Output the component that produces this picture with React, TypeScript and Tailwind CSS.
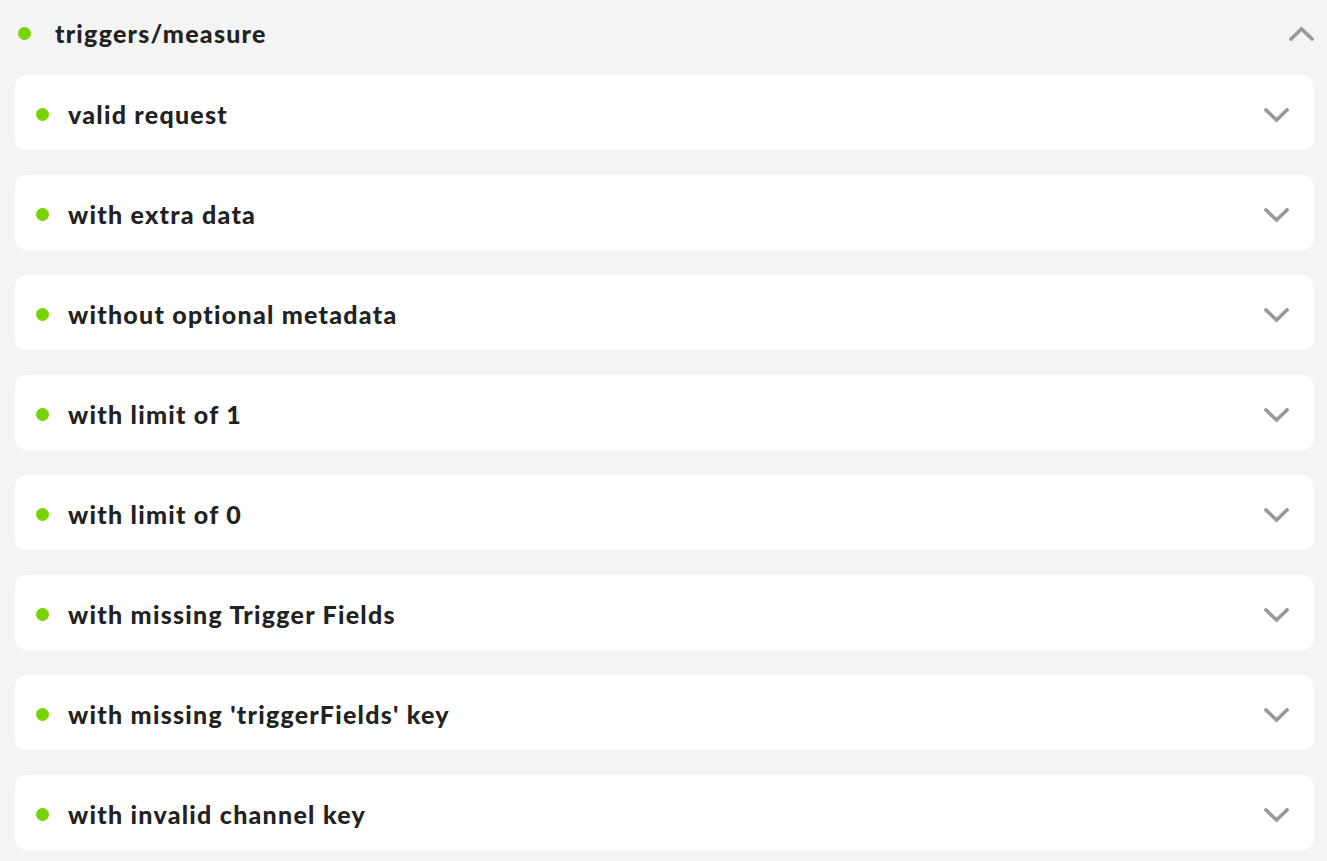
import React from "react";

const cases = [
  "valid request",
  "with extra data",
  "without optional metadata",
  "with limit of 1",
  "with limit of 0",
  "with missing Trigger Fields",
  "with missing 'triggerFields' key",
  "with invalid channel key",
];

const Chevron: React.FC<{ up?: boolean }> = ({ up }) => (
  <svg width="25" height="15" viewBox="0 0 25 15" fill="none" className="shrink-0 block">
    <path
      d={up ? "M2 13 L12.5 3 L23 13" : "M2 2 L12.5 12 L23 2"}
      stroke="#999999"
      strokeWidth="3.6"
      strokeLinecap="square"
    />
  </svg>
);

const Dot: React.FC = () => <span className="block w-[13px] h-[13px] rounded-full bg-[#77d400] shrink-0" />;

const App: React.FC = () => {
  return (
    <div
      className="min-h-screen bg-[#f4f4f4] pl-[15px] pr-[13px] text-[#222222]"
      style={{ fontFamily: "Lato, 'Noto Sans', sans-serif" }}
    >
      {/* Group header */}
      <div className="h-[67px] flex items-center">
        <div className="ml-[3px]">
          <Dot />
        </div>
        <h2 className="ml-[24px] text-[25px] font-black tracking-[1.25px] flex-1 leading-none">triggers/measure</h2>
        <div>
          <Chevron up />
        </div>
      </div>

      {/* Test cases */}
      <div className="mt-[8px] flex flex-col gap-[25px] pb-[12px]">
        {cases.map((name) => (
          <div key={name} className="h-[75px] bg-white rounded-[12px] flex items-center pt-[4px] pl-[21px] pr-[25px]">
            <Dot />
            <span className="ml-[19px] text-[25px] font-black tracking-[1.25px] flex-1 leading-none">{name}</span>
            <div className="mt-[2px]">
              <Chevron />
            </div>
          </div>
        ))}
      </div>
    </div>
  );
};

export default App;
